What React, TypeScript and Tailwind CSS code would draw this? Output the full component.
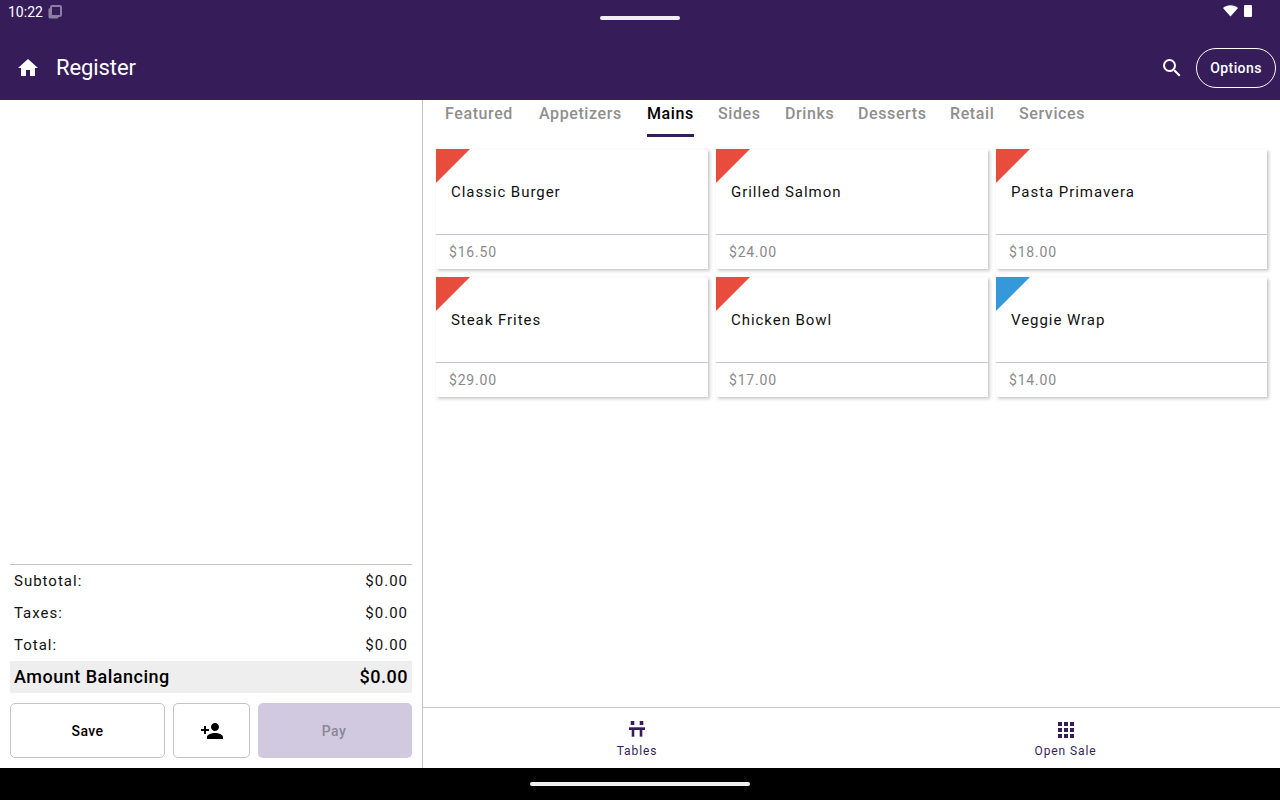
import React from "react";

const font = { fontFamily: "Roboto, sans-serif" };

const tabs = [
  { label: "Featured", width: "w-[94px]" },
  { label: "Appetizers", width: "w-[108px]" },
  { label: "Mains", width: "w-[71px]" },
  { label: "Sides", width: "w-[67px]" },
  { label: "Drinks", width: "w-[73px]" },
  { label: "Desserts", width: "w-[92px]" },
  { label: "Retail", width: "w-[69px]" },
  { label: "Services", width: "w-[70px]" },
];
const items = [
  { name: "Classic Burger", price: "$16.50", blue: false },
  { name: "Grilled Salmon", price: "$24.00", blue: false },
  { name: "Pasta Primavera", price: "$18.00", blue: false },
  { name: "Steak Frites", price: "$29.00", blue: false },
  { name: "Chicken Bowl", price: "$17.00", blue: false },
  { name: "Veggie Wrap", price: "$14.00", blue: true },
];

function Card({ name, price, blue }: { name: string; price: string; blue: boolean }) {
  return (
    <div className="relative h-[120px] flex flex-col bg-white shadow-[2px_2px_3px_rgba(0,0,0,0.2),0_0_1px_rgba(0,0,0,0.1)]">
      <svg className="absolute left-0 top-0" width="34" height="34" viewBox="0 0 34 34">
        <polygon points="0,0 34,0 0,34" fill={blue ? "#3498db" : "#e74c3c"} />
      </svg>
      <div className="h-[86px] pl-[15px] pt-[33px] text-[15px] leading-[20px] tracking-[0.95px] text-[#111] border-b border-[#c8c6ce]">{name}</div>
      <div className="pl-[13px] pt-[8px] text-[14px] leading-[18px] tracking-[0.8px] text-[#8a8a8a]">{price}</div>
    </div>
  );
}

function Row({ label, value }: { label: string; value: string }) {
  return (
    <div className="h-[32px] flex items-center justify-between pl-[4px] pr-[4px] text-[15px] tracking-[1px] text-[#111]">
      <span>{label}</span>
      <span>{value}</span>
    </div>
  );
}

export default function App() {
  return (
    <div className="w-[1280px] h-[800px] flex flex-col overflow-hidden bg-white" style={font}>
      <header className="h-[100px] shrink-0 bg-[#371c5a] text-white flex flex-col">
        <div className="h-[36px] shrink-0 relative flex items-start justify-between pl-[8px] pr-[28px] pt-[3px]">
          <div className="flex items-center gap-[5px] text-[14px] leading-[18px]">
            <span>10:22</span>
            <svg width="14" height="14" viewBox="0 0 14 14" fill="none">
              <rect x="0.5" y="3" width="10" height="10.5" rx="1.5" fill="#8d7ea3" />
              <rect x="3" y="1" width="10" height="10" rx="1.2" fill="#371c5a" stroke="#8d7ea3" strokeWidth="2" />
            </svg>
          </div>
          <div className="absolute left-[600px] top-[16px] w-[80px] h-[4px] rounded-full bg-[#f0eef2]" />
          <div className="flex items-center gap-[6px] pt-[2px]">
            <svg width="15" height="12" viewBox="0 0 15 12">
              <path d="M7.5 11.5 0 3C2 1.2 4.6 0.2 7.5 0.2S13 1.2 15 3z" fill="#fff" />
            </svg>
            <div className="w-[8px] h-[12px] bg-white rounded-[1px]" />
          </div>
        </div>
        <div className="flex-1 flex items-center pl-[16px] pr-[4px] pb-[1px]">
          <svg width="24" height="24" viewBox="0 0 24 24" fill="#fff">
            <path d="M10 20v-6h4v6h5v-8h3L12 3 2 12h3v8z" />
          </svg>
          <span className="ml-[16px] text-[22px] leading-[28px] tracking-[-0.1px]">Register</span>
          <div className="ml-auto flex items-center gap-[12px]">
            <svg width="24" height="24" viewBox="0 0 24 24" fill="#fff">
              <path d="M15.5 14h-.79l-.28-.27A6.471 6.471 0 0 0 16 9.5 6.5 6.5 0 1 0 9.5 16c1.61 0 3.09-.59 4.23-1.57l.27.28v.79l5 4.99L20.49 19l-4.99-5zm-6 0C7.01 14 5 11.99 5 9.5S7.01 5 9.5 5 14 7.01 14 9.5 11.99 14 9.5 14z" />
            </svg>
            <div className="w-[80px] h-[40px] rounded-[20px] border border-white flex items-center justify-center pt-[2px] text-[14px] font-medium tracking-[0.4px]">Options</div>
          </div>
        </div>
      </header>

      <main className="flex-1 min-h-0 flex">
        <aside className="w-[423px] shrink-0 border-r border-[#c4c4c4] flex flex-col justify-end px-[10px] pb-[10px]">
          <div className="border-t border-[#c4c4c4]">
            <Row label="Subtotal:" value="$0.00" />
            <Row label="Taxes:" value="$0.00" />
            <Row label="Total:" value="$0.00" />
            <div className="h-[32px] bg-[#eeeeee] flex items-center justify-between pl-[4px] pr-[4px] pb-[1px] text-[18px] font-medium tracking-[0.5px] text-black">
              <span>Amount Balancing</span>
              <span>$0.00</span>
            </div>
          </div>
          <div className="mt-[10px] h-[55px] flex gap-[8px]">
            <div className="w-[155px] rounded-[5px] border border-[#c4c4c4] flex items-center justify-center pt-[2px] text-[14px] font-medium tracking-[0.4px] text-black">Save</div>
            <div className="w-[77px] rounded-[5px] border border-[#c4c4c4] flex items-center justify-center">
              <svg width="24" height="24" viewBox="0 0 24 24" fill="#000">
                <path d="M15 12c2.21 0 4-1.79 4-4s-1.79-4-4-4-4 1.79-4 4 1.79 4 4 4zm-9-2V7H4v3H1v2h3v3h2v-3h3v-2H6zm9 4c-2.67 0-8 1.34-8 4v2h16v-2c0-2.66-5.33-4-8-4z" />
              </svg>
            </div>
            <div className="flex-1 rounded-[5px] bg-[#d1c9e0] flex items-center justify-center pt-[2px] pr-[2px] text-[14px] font-medium tracking-[0.4px] text-[#8b8794]">Pay</div>
          </div>
        </aside>

        <section className="flex-1 min-w-0 flex flex-col">
          <nav className="h-[37px] shrink-0 flex pl-[22px] text-[16px] font-medium tracking-[0.6px] text-[#8f8f8f]">
            {tabs.map((t) => (
              <div key={t.label} className={t.width}>
                <div className={t.label === "Mains" ? "w-fit h-[37px] pt-[4px] leading-[20px] text-black border-b-[3px] border-[#371c5a]" : "w-fit h-[37px] pt-[4px] leading-[20px]"}>
                  {t.label}
                </div>
              </div>
            ))}
          </nav>
          <div className="flex-1 min-h-0 pt-[12px] pl-[13px]">
            <div className="grid grid-cols-[272px_272px_271px] gap-[8px]">
              {items.map((i) => (
                <Card key={i.name} {...i} />
              ))}
            </div>
          </div>
          <div className="h-[61px] shrink-0 border-t border-[#c9c9c9] flex text-[#371c5a]">
            <div className="w-[428px] flex flex-col items-center pt-[10px]">
              <svg width="24" height="24" viewBox="0 0 24 24" fill="#371c5a">
                <rect x="5.7" y="3" width="3.6" height="4" />
                <rect x="14.7" y="3" width="3.6" height="4" />
                <rect x="4" y="9.3" width="16" height="2.7" />
                <rect x="6.7" y="12" width="2.6" height="6.7" />
                <rect x="14.7" y="12" width="2.6" height="6.7" />
              </svg>
              <span className="mt-[1px] text-[12px] leading-[16px] tracking-[0.9px]">Tables</span>
            </div>
            <div className="flex-1 flex flex-col items-center pt-[10px]">
              <svg width="24" height="24" viewBox="0 0 24 24" fill="#371c5a">
                <path d="M4 8h4V4H4v4zm6 12h4v-4h-4v4zm-6 0h4v-4H4v4zm0-6h4v-4H4v4zm6 0h4v-4h-4v4zm6-10v4h4V4h-4zm-6 4h4V4h-4v4zm6 6h4v-4h-4v4zm0 6h4v-4h-4v4z" />
              </svg>
              <span className="mt-[1px] text-[12px] leading-[16px] tracking-[0.9px]">Open Sale</span>
            </div>
          </div>
        </section>
      </main>

      <footer className="h-[32px] shrink-0 bg-black flex items-center justify-center">
        <div className="w-[220px] h-[4px] rounded-full bg-[#f0f0f0]" />
      </footer>
    </div>
  );
}
